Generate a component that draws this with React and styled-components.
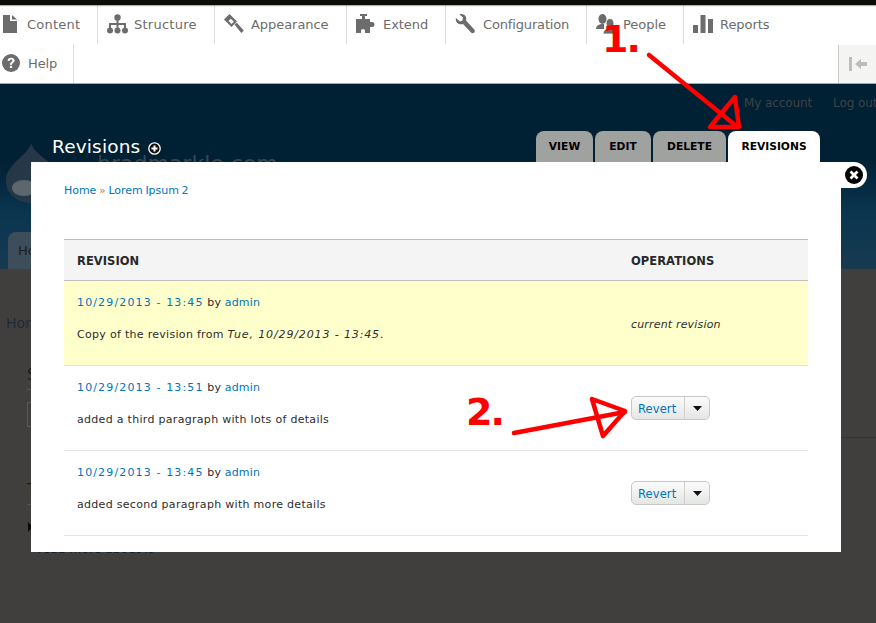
import React from 'react';
import styled, { createGlobalStyle } from 'styled-components';

const Global = createGlobalStyle`
  html, body { margin: 0; padding: 0; background: #403f3d; }
  body { font-family: "DejaVu Sans", Verdana, sans-serif; width: 876px; height: 623px; overflow: hidden; }
`;
const Page = styled.div`
  position: relative; width: 876px; height: 623px; overflow: hidden; background: #403f3d;
`;
const TopBar = styled.div`
  height: 5px; background: #0c0c08; box-shadow: 0 1px 1px rgba(0,0,0,.3); position: relative;
`;
const Toolbar = styled.nav`
  background: #fff; border-bottom: 1px solid #a8a8a8; height: 78px;
`;
const Row = styled.div`
  display: flex; height: 39px; justify-content: space-between;
`;
const Items = styled.div`
  display: flex;
`;
const Item = styled.a`
  box-sizing: border-box; width: ${p => p.$w}px; height: 39px; padding-left: ${p => p.$pad}px;
  display: flex; align-items: center; gap: ${p => p.$gap}px;
  border-right: ${p => (p.$last ? 'none' : '1px solid #dcdcdc')};
  font-size: 13px; letter-spacing: ${p => p.$ls}px; color: #6c6c6c; padding-bottom: 1px;
`;
const Toggle = styled.div`
  box-sizing: border-box; width: 38px; height: 38px; margin-top: 1px; background: #f4f4f2;
  border-left: 1px solid #ccc; display: flex; align-items: center; justify-content: center;
`;
const Header = styled.header`
  height: 185px; position: relative; box-sizing: border-box; overflow: hidden;
  background: linear-gradient(#002033 0, #002033 75px, #0b3550 130px, #173a50 185px);
`;
const UserLinks = styled.div`
  display: flex; gap: 21px; padding: 12px 0 0 744px;
  font-size: 12px; color: #3f4346; height: 35px; box-sizing: border-box; letter-spacing: -.1px;
  line-height: 15px; white-space: nowrap; width: 876px;
`;
const TitleRow = styled.div`
  display: flex; justify-content: space-between; align-items: flex-end; height: 43px; padding: 12px 56px 0 52px;
  box-sizing: border-box; position: relative; z-index: 1;
`;
const Title = styled.h1`
  margin: 0 0 3px; color: #fff; font-size: 18.5px; font-weight: 400; line-height: 25px;
  display: flex; align-items: center; gap: 8px; letter-spacing: .15px;
  svg { margin-top: 3px; }
`;
const Tabs = styled.div`
  display: flex; gap: 2px;
`;
const Tab = styled.div`
  box-sizing: border-box; height: 31px; width: ${p => p.$w}px;
  border-radius: 8px 8px 0 0; background: ${p => (p.$active ? '#fff' : '#a0a2a0')};
  color: #000; font-size: 10.7px; font-weight: 700; line-height: 31px; text-align: center;
`;
const SiteName = styled.div`
  margin: -12px 0 0 97px; color: #3a4750; font-size: 22px; line-height: 27px; white-space: nowrap;
`;
const HomeTab = styled.div`
  position: absolute; left: 8px; bottom: 0; width: 60px; height: 37px; background: #3d4d5a;
  border-radius: 8px 0 0 0; color: #1c1e1f; font-size: 13px; line-height: 38px; padding-left: 10px; box-sizing: border-box;
`;
const Logo = styled.svg`
  position: absolute; left: 5px; top: 59px;
`;
const Backdrop = styled.main`
  padding: 47px 0 0 6px; color: #1d2a38; font-size: 14px; position: relative;
`;
const Crumb = styled.div` line-height: 14px; height: 49px; `;
const Peek = styled.div`
  margin: ${p => p.$top}px 0 0 21px; width: 60px; font-size: 16px; line-height: 20px; height: 24px; box-sizing: content-box;
  border-bottom: 1px solid #555; color: #1a1a1a;
`;
const PeekBox = styled.div`
  margin: 12px 0 0 21px; width: 20px; height: 25px; border: 1px solid #5a5a5a; box-sizing: border-box;
`;
const PeekRule = styled.div`
  position: absolute; left: 841px; right: 0; top: 168px; border-top: 1px solid #333;
`;
const PeekCaret = styled.div`
  margin: 17px 0 0 22px; width: 0; height: 0; border-left: 5px solid #0a0a0a;
  border-top: 5px solid transparent; border-bottom: 5px solid transparent;
`;
const PeekLink = styled.div`
  margin: 9px 0 0 32px; font-size: 12px; letter-spacing: .15px; color: #0a1a2a; line-height: 16px; white-space: nowrap;
`;
const Modal = styled.section`
  position: absolute; left: 31px; top: 162px; width: 810px; height: 390px; background: #fff;
  box-sizing: border-box; padding: 22px 33px 0;
`;
const Close = styled.button`
  position: absolute; right: -26px; top: 0; width: 26px; height: 26px; border: 0; padding: 0;
  background: #fff; border-radius: 0 13px 13px 0; display: flex; align-items: center; justify-content: center;
`;
const Breadcrumb = styled.div`
  font-size: 11px; line-height: 13px; color: #0074bd; letter-spacing: -.05px; word-spacing: -.7px;
  span { color: #d07b1a; }
`;
const Table = styled.table`
  width: 744px; margin-top: 42px; border-collapse: collapse; table-layout: fixed; font-size: 11px; letter-spacing: .17px; color: #2d2d2d;
`;
const FirstCol = styled.col` width: 554px; `;
const Th = styled.th`
  height: 39px; padding: 1px 13px 0; text-align: left; background: #f3f4f3; color: #27292b;
  border-top: 1px solid #bebfbf; border-bottom: 1px solid #bebfbf; font-size: 11.5px; font-weight: 700; letter-spacing: .05px;
`;
const Tr = styled.tr`
  background: ${p => (p.$current ? '#ffffcc' : '#fff')};
`;
const Td = styled.td`
  height: 85px; box-sizing: border-box; padding: ${p => p.$top}px 13px 0; border-bottom: 1px solid #e4e4e4; vertical-align: top;
`;
const Meta = styled.div` line-height: 15px; margin-bottom: 17px; `;
const Link = styled.a` color: #0074bd; `;
const DateLink = styled(Link)` letter-spacing: 1.14px; `;
const Note = styled.div` line-height: 15px; letter-spacing: .3px; `;
const NoteDate = styled.em` letter-spacing: .87px; `;
const CurrentLabel = styled.em` display: block; line-height: 15px; `;
const Split = styled.div`
  display: flex; box-sizing: border-box; width: 79px; height: 24px; border: 1px solid #c8c8c8; border-radius: 5px;
  background: linear-gradient(#fbfbfb, #e4e6e4); color: #0074bd; font-size: 11.5px; line-height: 24px;
`;
const SplitLabel = styled.span`
  width: 53px; box-sizing: border-box; padding-left: 6px; border-right: 1px solid #cfcfcf; letter-spacing: .1px;
`;
const SplitCaret = styled.span`
  flex: 1; display: flex; align-items: center; justify-content: center;
`;
const Annotations = styled.svg`
  position: absolute; left: 0; top: 0; pointer-events: none;
`;
const Mark = styled.div`
  position: absolute; left: ${p => p.$x}px; top: ${p => p.$y}px; color: #ff0000; font: 700 38px/40px "DejaVu Sans", sans-serif; letter-spacing: -2px;
`;

const I = ({ children, w = 22, h = 22, view = '0 0 22 22' }) => (
  <svg width={w} height={h} viewBox={view} fill="#6c6c6c" aria-hidden="true">{children}</svg>
);

const ContentIcon = () => (
  <I w={14} h={18} view="0 0 14 18"><path d="M0 0H7V6H14V18H0Z" /><path d="M9 0L14 4.500H9Z" /></I>
);
const StructureIcon = () => (
  <I w={21} h={20} view="0 0 21 20">
    <circle cx="10.500" cy="3.500" r="3.200" /><circle cx="3" cy="16.500" r="3" /><circle cx="10.500" cy="16.500" r="3" /><circle cx="18" cy="16.500" r="3" />
    <path d="M9.500 5h2v4h7.500v6h-2v-4h-5.500v4h-2v-4H4v4H2V9h7.500z" />
  </I>
);
const AppearanceIcon = () => (
  <I w={20} h={20} view="0 0 20 20">
    <path d="M5.500 0L13 7.500L7.500 13L0 5.500Z" /><path d="M6.800 4.800L9.800 7.800L7.500 10.100L4.500 7.100Z" fill="#fff" />
    <path d="M10.500 10.500L12.800 8.800L19.800 16.500L17.300 19Z" />
  </I>
);
const ExtendIcon = () => (
  <I w={20} h={20} view="0 0 20 20">
    <path d="M4 0h7v2H9v3h5v3h2a2.500 2.500 0 1 1 0 5h-2v6H9v-2a2 2 0 0 0-4 0v2H0V5h6V2H4z" />
  </I>
);
const ConfigIcon = () => (
  <I w={20} h={20} view="0 0 20 20">
    <path d="M1 4L5 7.500L7.500 6.500L8 3.500L4.500 0.500C7-.5 10 .5 11 3C11.500 4.200 11.300 5.500 11 6.500L19.300 15.500C20 16.500 20 17.500 19.300 18.500C18.500 19.300 17 19.500 16 18.500L8 10C6.500 10.500 4 10.500 2.300 9C1 7.500 .5 5.500 1 4Z" />
  </I>
);
const PeopleIcon = () => (
  <I w={20} h={20} view="0 0 20 20">
    <ellipse cx="6.500" cy="5" rx="4" ry="5" /><path d="M0 15c0-3 2-4 5-5h3v5z" />
    <ellipse cx="14" cy="9.500" rx="3.500" ry="4.500" /><path d="M7 20c0-3 2-5 5-6h4c2.500 1 4 3 4 6z" stroke="#fff" strokeWidth=".8" />
  </I>
);
const ReportsIcon = () => (
  <I w={20} h={18} view="0 0 20 18"><rect x="0" y="10" width="5" height="8" /><rect x="7.500" y="0" width="5" height="18" /><rect x="15" y="4" width="5" height="14" /></I>
);
const HelpIcon = () => (
  <I w={18} h={18} view="0 0 18 18">
    <circle cx="9" cy="9" r="9" />
    <path d="M5.500 6.800C5.700 4.800 7.200 3.700 9.100 3.700C11 3.700 12.600 4.800 12.600 6.600C12.600 8.900 10.100 8.900 10.100 10.800H7.900C7.900 8 10.300 8 10.300 6.700C10.300 6 9.800 5.600 9 5.600C8.200 5.600 7.700 6.100 7.600 6.900Z" fill="#fff" />
    <rect x="7.900" y="11.800" width="2.200" height="2.200" fill="#fff" />
  </I>
);

const nav = [
  { t: 'Content', w: 98, pad: 3, gap: 10, ls: 0.25, Icon: ContentIcon },
  { t: 'Structure', w: 117, pad: 9, gap: 6, ls: 0.25, Icon: StructureIcon },
  { t: 'Appearance', w: 132, pad: 9, gap: 7, ls: -0.05, Icon: AppearanceIcon },
  { t: 'Extend', w: 99, pad: 9, gap: 7, ls: -0.05, Icon: ExtendIcon },
  { t: 'Configuration', w: 141, pad: 9, gap: 8, ls: -0.15, Icon: ConfigIcon },
  { t: 'People', w: 97, pad: 9, gap: 7, ls: -0.05, Icon: PeopleIcon },
  { t: 'Reports', w: 100, pad: 9, gap: 7, ls: -0.05, Icon: ReportsIcon, last: true },
];

const rows = [
  { when: '10/29/2013 - 13:51', note: 'added a third paragraph with lots of details' },
  { when: '10/29/2013 - 13:45', note: 'added second paragraph with more details' },
];

export default function App() {
  return (
    <Page>
      <Global />
      <TopBar />
      <Toolbar>
        <Row>
          <Items>
            {nav.map(({ t, w, pad, gap, ls, Icon, last }) => (
              <Item key={t} $w={w} $pad={pad} $gap={gap} $ls={ls} $last={last}><Icon />{t}</Item>
            ))}
          </Items>
        </Row>
        <Row>
          <Items>
            <Item $w={74} $pad={2} $gap={8} $ls={-0.1}><HelpIcon />Help</Item>
          </Items>
          <Toggle>
            <svg width="18" height="14" viewBox="0 0 18 14" fill="#bdbdbd"><rect x="0" y="0" width="3" height="14" /><path d="M6 7l6-5v3h6v4h-6v3z" /></svg>
          </Toggle>
        </Row>
      </Toolbar>
      <Header>
        <UserLinks><span>My account</span><span>Log out</span></UserLinks>
        <TitleRow>
          <Title>
            Revisions
            <svg width="13" height="13" viewBox="0 0 13 13"><circle cx="6.500" cy="6.500" r="5.700" fill="#111" stroke="#fff" strokeWidth="1.300" /><path d="M3.500 6.500h6M6.500 3.500v6" stroke="#fff" strokeWidth="2" /></svg>
          </Title>
          <Tabs>
            <Tab $w={57}>VIEW</Tab>
            <Tab $w={56}>EDIT</Tab>
            <Tab $w={73}>DELETE</Tab>
            <Tab $w={92} $active>REVISIONS</Tab>
          </Tabs>
        </TitleRow>
        <SiteName>bradmarkle.com</SiteName>
        <Logo width="58" height="66" viewBox="0 0 58 66">
          <path d="M26 0C24 12 1 20 1 38C1 50 12 60 26 60C41 60 55 52 55 38C55 20 30 14 26 0Z" fill="#263848" />
          <ellipse cx="19" cy="45" rx="12" ry="8" fill="#5b676c" />
        </Logo>
        <HomeTab>Ho</HomeTab>
      </Header>
      <Backdrop>
        <Crumb>Home</Crumb>
        <Peek $top={0}>S</Peek>
        <PeekBox />
        <Peek $top={53}>T</Peek>
        <PeekCaret />
        <PeekLink>read more about it</PeekLink>
        <PeekRule />
      </Backdrop>
      <Modal>
        <Close aria-label="Close">
          <svg width="18" height="18" viewBox="0 0 18 18"><circle cx="9" cy="9" r="9" fill="#000" /><path d="M5.500 5.500l7 7M12.500 5.500l-7 7" stroke="#fff" strokeWidth="2.800" /></svg>
        </Close>
        <Breadcrumb><Link>Home</Link> <span>»</span> <Link>Lorem Ipsum 2</Link></Breadcrumb>
        <Table>
          <colgroup><FirstCol /><col /></colgroup>
          <thead>
            <tr><Th>REVISION</Th><Th>OPERATIONS</Th></tr>
          </thead>
          <tbody>
            <Tr $current>
              <Td $top={14}>
                <Meta><DateLink>10/29/2013 - 13:45</DateLink> by <Link>admin</Link></Meta>
                <Note>Copy of the revision from <NoteDate>Tue, 10/29/2013 - 13:45</NoteDate>.</Note>
              </Td>
              <Td $top={36}><CurrentLabel>current revision</CurrentLabel></Td>
            </Tr>
            {rows.map(r => (
              <Tr key={r.when}>
                <Td $top={14}>
                  <Meta><DateLink>{r.when}</DateLink> by <Link>admin</Link></Meta>
                  <Note>{r.note}</Note>
                </Td>
                <Td $top={30}>
                  <Split>
                    <SplitLabel>Revert</SplitLabel>
                    <SplitCaret><svg width="9" height="5" viewBox="0 0 9 5"><path d="M0 0h9L4.500 5z" fill="#111" /></svg></SplitCaret>
                  </Split>
                </Td>
              </Tr>
            ))}
          </tbody>
        </Table>
      </Modal>
      <Mark $x={602} $y={19}>1.</Mark>
      <Mark $x={466} $y={392}>2.</Mark>
      <Annotations width="876" height="623" viewBox="0 0 876 623" fill="none" stroke="#ff0000" strokeWidth="4.500" strokeLinecap="round" strokeLinejoin="round">
        <path d="M649 55L735 125" />
        <path d="M735 97L710 127L739 127Z" />
        <path d="M514 433L625 412" />
        <path d="M592 399L625 411L603 436Z" />
      </Annotations>
    </Page>
  );
}
